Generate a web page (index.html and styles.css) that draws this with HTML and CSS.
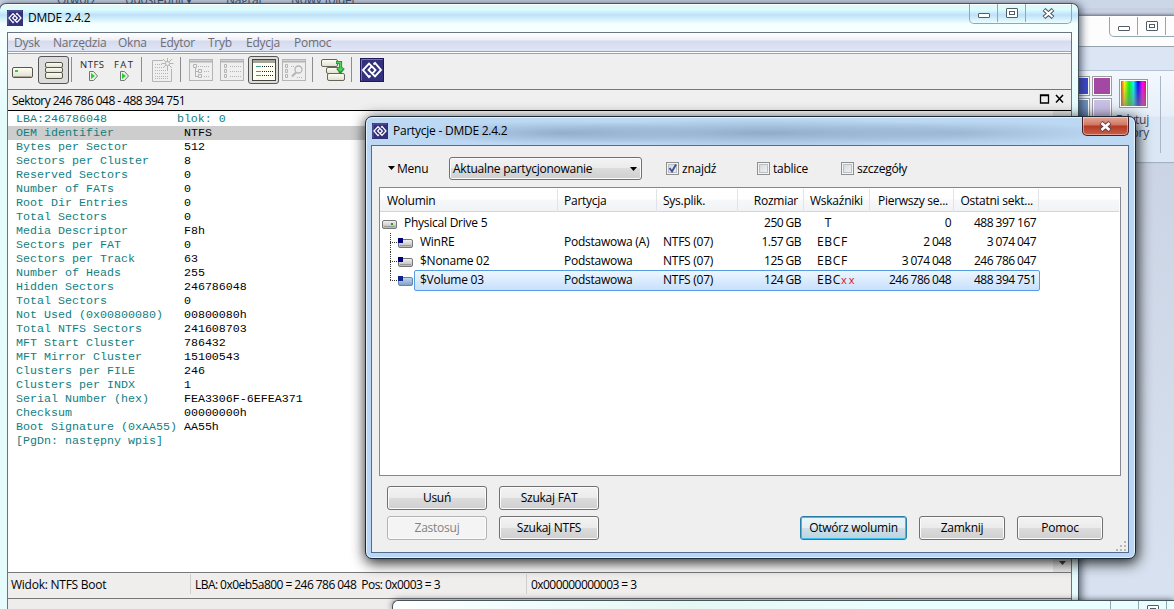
FILE: index.html
```html
<!DOCTYPE html>
<html lang="pl">
<head>
  <meta charset="UTF-8">
  <title>DMDE 2.4.2</title>
  <link rel="stylesheet" href="styles.css">
</head>
<body>

  <svg class="defs" width="0" height="0">
    <defs>
      <linearGradient id="box" x1="0" y1="0" x2="0" y2="1">
        <stop offset="0" stop-color="#fffff4"/><stop offset="1" stop-color="#deded0"/>
      </linearGradient>
      <linearGradient id="drv" x1="0" y1="0" x2="0" y2="1">
        <stop offset="0" stop-color="#f4f4f4"/><stop offset="1" stop-color="#b4b4b4"/>
      </linearGradient>
      <linearGradient id="drvsel" x1="0" y1="0" x2="0" y2="1">
        <stop offset="0" stop-color="#c4daf0"/><stop offset="1" stop-color="#7c9fc4"/>
      </linearGradient>
    </defs>
    <symbol id="logo" viewBox="0 0 24 24">
      <rect x=".5" y=".5" width="23" height="23" fill="#33317c" stroke="#1d1960"/>
      <path d="M1.5 22.500V1.500H22.500" fill="none" stroke="#7774b4"/>
      <path d="M10.500 17.500L9 19L3 12L9 5.500L15.500 12L12.500 15.500M13.500 6.500L15 5L21 12L15 18.500L8.500 12L11.500 8.500" fill="none" stroke="#fff" stroke-width="1.900"/>
    </symbol>
    <symbol id="part" viewBox="0 0 15 10">
      <rect x=".5" y="1.500" width="14" height="8" rx="1.500" fill="url(#drv)" stroke="#777"/>
      <path d="M2 7.500h11" stroke="#999"/>
      <rect width="5" height="5" fill="#00007c"/>
    </symbol>
    <symbol id="partsel" viewBox="0 0 15 10">
      <rect x=".5" y="1.500" width="14" height="8" rx="1.500" fill="url(#drvsel)" stroke="#6484a8"/>
      <rect width="5" height="5" fill="#10248c"/>
    </symbol>
  </svg>

  <!-- okna w tle -->
  <div class="back-top">
    <span class="b1">Otwórz</span><span class="b2">Udostępnij ▾</span><span class="b3">Nagraj</span><span class="b4">Nowy folder</span>
  </div>

  <div class="paint">
    <div class="paint-title">
      <div class="caption"><i><b class="min"></b></i><i><b class="max"></b></i><i></i></div>
    </div>
    <div class="paint-tabs"></div>
    <div class="ribbon">
      <div class="colors">
        <i class="c-blue"></i><i class="c-purple"></i>
        <i class="c-steel"></i><i class="c-lav"></i>
      </div>
      <div class="edit-colors"><span class="rainbow"></span>Edytuj<br>kolory</div>
      <div class="ribbon-sep"></div>
    </div>
  </div>

  <!-- okno główne -->
  <div class="main-window">
    <div class="titlebar">
      <svg class="app-icon" width="16" height="16"><use href="#logo"/></svg>
      <span class="title">DMDE 2.4.2</span>
      <div class="caption"><i><b class="min"></b></i><i><b class="max"></b></i><i class="wide"><svg width="15" height="11"><path d="M3 1.500l9 8M12 1.500l-9 8" stroke="#4c5866" stroke-width="4.200"/><path d="M3.500 2l8 7M11.500 2l-8 7" stroke="#fff" stroke-width="2"/></svg></i></div>
    </div>
    <div class="client">
      <div class="menubar">
        <span class="m1">Dysk</span><span class="m2">Narzędzia</span><span class="m3">Okna</span><span class="m4">Edytor</span><span class="m5">Tryb</span><span class="m6">Edycja</span><span class="m7">Pomoc</span>
      </div>
      <div class="toolbar">
        <svg width="384" height="35" viewBox="8 54 384 35">
          <!-- dysk -->
          <rect x="12.500" y="67.500" width="20" height="10" rx="1.500" fill="url(#box)" stroke="#55554c"/>
          <path d="M14 76.500h17" stroke="#aaa998"/>
          <rect x="15" y="70" width="3" height="2" fill="#3bc43b"/>
          <!-- partycje -->
          <rect x="38.500" y="56.500" width="30" height="27" rx="2.500" class="pressed"/>
          <g fill="url(#box)" stroke="#55554c">
            <rect x="45.500" y="62.500" width="17" height="5" rx="1.500"/>
            <rect x="45.500" y="67.500" width="17" height="5" rx="1.500"/>
            <rect x="45.500" y="72.500" width="17" height="6" rx="1.500"/>
          </g>
          <path d="M71.500 57v25M141.500 57v25M180.500 57v25M312.500 57v25M351.500 57v25" stroke="#8c8c8c"/>
          <text x="80" y="68" textLength="24">NTFS</text>
          <text x="114" y="68" textLength="19">FAT</text>
          <g fill="#e8f4e4" stroke="#6d796d">
            <path d="M89.500 71.500h4l4 4.500l-4 4.500h-4z"/>
            <path d="M120.500 71.500h4l4 4.500l-4 4.500h-4z"/>
          </g>
          <path d="M91 73l4 3l-4 3zM122 73l4 3l-4 3z" fill="#2ccc3c"/>
          <!-- nowy -->
          <g fill="none" stroke="#b4b4b4">
            <path d="M163 60.500H152.500v21H171.500V69"/>
            <path d="M155 64.500h7M155 67.500h8M155 70.500h13M155 73.500h13M155 76.500h13M155 78.500h13" stroke-dasharray="1 1"/>
            <path d="M167.500 58v4M167.500 66v4M161.500 63.500h4M169.500 63.500h4M163 59l3 3M172 59l-3 3M163 68l3-3M172 68l-3-3"/>
            <circle cx="167.500" cy="63.500" r="2"/>
          </g>
          <!-- widoki -->
          <g fill="none" stroke="#b4b4b4">
            <rect x="189.500" y="59.500" width="23" height="21"/><path d="M190 61.500h22" stroke-width="2"/>
            <rect x="220.500" y="59.500" width="23" height="21"/><path d="M221 61.500h22" stroke-width="2"/>
            <rect x="282.500" y="59.500" width="23" height="21"/><path d="M283 61.500h22" stroke-width="2"/>
            <path d="M193.500 64.500h3v3h-3zM195.500 68v9M196 71.500h2M196 76.500h2M198.500 69.500h3v3h-3zM198.500 74.500h3v3h-3z"/>
            <path d="M198 66.500h12M204 71.500h6M204 76.500h6M230 66.500h11M230 71.500h11M230 76.500h11M291 66.500h4" stroke-dasharray="1 1"/>
            <path d="M224.500 64.500h2v3h-2zM224.500 69.500h2v3h-2zM224.500 74.500h2v3h-2z"/>
            <path d="M285.500 64.500h2v3h-2zM285.500 69.500h2v3h-2zM285.500 74.500h2v3h-2z"/>
            <circle cx="298.500" cy="69.500" r="3.500" stroke-width="1.300"/><path d="M296 72.500l-4 4" stroke-width="2"/>
            <path d="M297 77.500h6" stroke-dasharray="1 1"/>
          </g>
          <!-- aktywny widok -->
          <rect x="248.500" y="56.500" width="30" height="27" rx="2.500" class="pressed"/>
          <rect x="252.500" y="59.500" width="23" height="21" fill="#fffff2" stroke="#45453d"/>
          <path d="M253 61.500h22" stroke="#a4a496" stroke-width="3"/>
          <path d="M256 66.500h17M256 71.500h17M256 75.500h17" stroke="#222" stroke-dasharray="1 1"/>
          <path d="M256 66.500h5M256 71.500h5M256 75.500h5" stroke="#3a9c94"/>
          <!-- kopiowanie -->
          <g fill="url(#box)" stroke="#66665a">
            <rect x="326.500" y="67.500" width="13" height="6" rx="1.500"/>
            <rect x="321.500" y="59.500" width="16" height="7" rx="1.500"/>
            <rect x="327.500" y="73.500" width="17" height="7" rx="1.500"/>
          </g>
          <path d="M336 62.500h4.500v8M337.500 68l3 3.500l3-3.500" fill="none" stroke="#238c2d" stroke-width="3.200"/>
          <path d="M336.500 62.500h4v8M338 68l2.500 2.500l2.500-2.500" fill="none" stroke="#4fd258" stroke-width="1.600"/>
          <svg x="360" y="58" width="24" height="24"><use href="#logo"/></svg>
        </svg>
      </div>
      <div class="panel-title">
        <span class="num">Sektory 246 786 048 - 488 394 751</span>
        <svg width="26" height="12"><path d="M1.500 2h8v8h-8zM1 2.500h9" fill="none" stroke="#000" stroke-width="1.300"/><path d="M17 2l7 7.500M24 2l-7 7.500" stroke="#000" stroke-width="1.500"/></svg>
      </div>
      <div class="editor">
        <div class="fields">
          <div>LBA:246786048          blok: 0</div>
          <div class="current">OEM identifier          <b>NTFS</b></div>
          <div>Bytes per Sector        <b>512</b></div>
          <div>Sectors per Cluster     <b>8</b></div>
          <div>Reserved Sectors        <b>0</b></div>
          <div>Number of FATs          <b>0</b></div>
          <div>Root Dir Entries        <b>0</b></div>
          <div>Total Sectors           <b>0</b></div>
          <div>Media Descriptor        <b>F8h</b></div>
          <div>Sectors per FAT         <b>0</b></div>
          <div>Sectors per Track       <b>63</b></div>
          <div>Number of Heads         <b>255</b></div>
          <div>Hidden Sectors          <b>246786048</b></div>
          <div>Total Sectors           <b>0</b></div>
          <div>Not Used (0x00800080)   <b>00800080h</b></div>
          <div>Total NTFS Sectors      <b>241608703</b></div>
          <div>MFT Start Cluster       <b>786432</b></div>
          <div>MFT Mirror Cluster      <b>15100543</b></div>
          <div>Clusters per FILE       <b>246</b></div>
          <div>Clusters per INDX       <b>1</b></div>
          <div>Serial Number (hex)     <b>FEA3306F-6EFEA371</b></div>
          <div>Checksum                <b>00000000h</b></div>
          <div>Boot Signature (0xAA55) <b>AA55h</b></div>
          <div>[PgDn: następny wpis]</div>
        </div>
        <div class="scrollbar"><svg width="7" height="4"><path d="M0 0h7L3.500 4z" fill="#444"/></svg></div>
      </div>
      <div class="status">
        <span class="s1">Widok: NTFS Boot</span>
        <span class="s2 num">LBA: 0x0eb5a800 = 246 786 048&nbsp; Pos: 0x0003 = 3</span>
        <span class="s3 num">0x000000000003 = 3</span>
      </div>
      <div class="below"></div>
    </div>
  </div>

  <div class="bottom-window"><div class="caption"><i></i><i><b class="max"></b></i><i></i></div></div>

  <!-- okno partycji -->
  <div class="dialog">
    <div class="dialog-title">
      <svg class="app-icon" width="16" height="16"><use href="#logo"/></svg>
      <span class="title">Partycje - DMDE 2.4.2</span>
      <div class="close"><svg width="15" height="11"><path d="M3 1.500l9 8M12 1.500l-9 8" stroke="#5c4048" stroke-width="4.400"/><path d="M3.500 2l8 7M11.500 2l-8 7" stroke="#fff" stroke-width="2.600"/></svg></div>
    </div>
    <div class="dialog-body">
      <div class="options">
        <span class="menu-btn"><svg width="7" height="4"><path d="M0 0h7L3.500 4z"/></svg>Menu</span>
        <div class="select">Aktualne partycjonowanie<svg width="7" height="4"><path d="M0 0h7L3.500 4z"/></svg></div>
        <label class="o1"><i class="check"><svg width="11" height="11"><path d="M2.500 5l2.500 3.500l4-7" fill="none" stroke="#44549c" stroke-width="2"/></svg></i>znajdź</label>
        <label class="o2"><i class="check"></i>tablice</label>
        <label class="o3"><i class="check"></i>szczegóły</label>
      </div>
      <div class="list">
        <div class="row head">
          <span>Wolumin</span><span>Partycja</span><span>Sys.plik.</span><span class="r">Rozmiar</span><span>Wskaźniki</span><span class="r">Pierwszy se...</span><span class="r">Ostatni sekt...</span>
        </div>
        <div class="row drive">
          <span class="name"><svg width="15" height="9"><rect x=".5" y=".5" width="14" height="8" rx="1.500" fill="url(#drv)" stroke="#777"/><path d="M2 6.500h11" stroke="#999"/><rect x="9" y="3" width="2" height="2" fill="#1ca01c"/></svg>Physical Drive 5</span>
          <span></span><span></span><span class="r num">250 GB</span><span class="flags">&nbsp; T</span><span class="r num">0</span><span class="r num">488 397 167</span>
        </div>
        <div class="row">
          <span class="name child"><svg width="15" height="10"><use href="#part"/></svg>WinRE</span>
          <span>Podstawowa (A)</span><span>NTFS (07)</span><span class="r num">1.57 GB</span><span class="flags">EBCF</span><span class="r num">2 048</span><span class="r num">3 074 047</span>
        </div>
        <div class="row">
          <span class="name child"><svg width="15" height="10"><use href="#part"/></svg>$Noname 02</span>
          <span>Podstawowa</span><span>NTFS (07)</span><span class="r num">125 GB</span><span class="flags">EBCF</span><span class="r num">3 074 048</span><span class="r num">246 786 047</span>
        </div>
        <div class="row selected">
          <span class="name child last"><svg width="15" height="10"><use href="#partsel"/></svg>$Volume 03</span>
          <span>Podstawowa</span><span>NTFS (07)</span><span class="r num">124 GB</span><span class="flags">EBC<em>xx</em></span><span class="r num">246 786 048</span><span class="r num">488 394 751</span>
        </div>
      </div>
      <div class="buttons">
        <div class="grid">
          <button>Usuń</button><button>Szukaj FAT</button>
          <button disabled>Zastosuj</button><button>Szukaj NTFS</button>
        </div>
        <div class="actions">
          <button class="default">Otwórz wolumin</button><button>Zamknij</button><button>Pomoc</button>
        </div>
      </div>
      <svg class="grip" width="10" height="10"><path d="M8 1h2M8 5h2M4 5h2M8 9h2M4 9h2M0 9h2" stroke="#b8b8b8" stroke-width="2"/></svg>
    </div>
  </div>

</body>
</html>
```

FILE: styles.css
```css
* {
  box-sizing: border-box;
}
body {
  margin: 0;
  width: 1174px;
  height: 609px;
  position: relative;
  overflow: hidden;
  font: 12px/15px "Open Sans", "Noto Sans", sans-serif;
  font-stretch: 90%;
  letter-spacing: -0.250px;
  color: #000;
  background: linear-gradient(#c6cfe0, #d8e2f0);
}
i, em {
  font-style: normal;
}
.defs {
  position: absolute;
}
.num {
  letter-spacing: -0.550px;
}

/* Okna w tle */
.back-top {
  position: absolute;
  left: 0;
  top: -8px;
  width: 1174px;
  height: 16px;
  overflow: hidden;
  background: linear-gradient(#bccbe0 0, #cbd6e6 4px);
  color: #39506e;
  line-height: 16px;
  display: flex;
}
.b1 { margin-left: 57px; width: 68px; }
.b2 { width: 101px; }
.b3 { width: 65px; }
.paint {
  position: absolute;
  left: 1060px;
  top: 15px;
  width: 114px;
  height: 148px;
  border-top: 1px solid #858c96;
  box-shadow: 0 -1px 2px #8993a3;
  background: #dfe8f5;
}
.paint-title {
  height: 31px;
  overflow: hidden;
  background: #fdfdfd;
  border-top: 1px solid #fff;
  border-bottom: 1px solid #97a2b0;
}
.paint .caption {
  margin-left: 49px;
  width: 120px;
}
.paint-tabs {
  height: 24px;
  background: #dbe5f4;
  border-bottom: 1px solid #b4c3d7;
}
.ribbon {
  display: flex;
  height: 92px;
  padding-top: 5px;
  background: linear-gradient(#f3f8fd 0, #e6eef9 45px, #dce7f5 46px);
  border-bottom: 1px solid #a4b1c3;
}
.colors {
  display: grid;
  grid-template-columns: 20px 20px;
  grid-template-rows: 20px 20px;
  gap: 2px;
  margin-left: 10px;
}
.colors i {
  border: 1px solid #9c9c9c;
  box-shadow: inset 0 0 0 1px #fff;
}
.c-blue { background: #3f48cc; }
.c-purple { background: #a349a4; }
.c-steel { background: #7092be; }
.c-lav { background: #c8bfe7; }
.edit-colors {
  width: 34px;
  margin: 3px 0 0 3px;
  text-align: right;
  line-height: 13px;
  color: #3c4a60;
}
.rainbow {
  display: block;
  width: 29px;
  height: 29px;
  margin: 0 0 5px 4px;
  border: 1px solid #999;
  box-shadow: inset 0 0 0 1px #fff;
  background: linear-gradient(transparent, rgba(128, 128, 128, 0.7)), linear-gradient(90deg, red, yellow, lime, cyan, blue, magenta, red);
}
.ribbon-sep {
  width: 1px;
  height: 77px;
  margin-left: 11px;
  background: #a8b6c8;
}

/* Przyciski okien */
.caption {
  display: flex;
  width: 103px;
  height: 20px;
  border: 1px solid #93a8ae;
  border-top: 0;
  border-radius: 0 0 5px 5px;
}
.caption i {
  width: 28px;
  height: 18px;
  display: flex;
  align-items: center;
  justify-content: center;
  border-right: 1px solid #93a8ae;
}
.caption i:last-child {
  flex: 1;
  border: 0;
}
.min {
  width: 12px;
  height: 5px;
  margin-top: 5px;
  border: 1px solid #535c66;
  border-radius: 1px;
  background: #fff;
}
.max {
  width: 12px;
  height: 10px;
  border: 1px solid #535c66;
  border-radius: 1px;
  background: #fff;
  display: flex;
}
.max::after {
  content: "";
  margin: 2px;
  flex: 1;
  border: 1px solid #535c66;
}

/* Okno główne */
.main-window {
  position: absolute;
  left: -1px;
  top: 3px;
  width: 1080px;
  height: 606px;
  overflow: hidden;
  padding: 0 6px 0 7px;
  border: 1px solid #46545f;
  border-bottom: 0;
  border-radius: 7px 7px 0 0;
  background: linear-gradient(#e4f8fb 0, #dafcfd 6px, #bfdffa 11px, #d3f2fb 15px, #f4ffff 20px, #f8ffff 30px, #e4fbfc 110px, #e6fcfc);
  box-shadow: inset 0 1px #fff, 2px 1px 9px rgba(30, 40, 60, 0.75);
}
.titlebar {
  display: flex;
  height: 28px;
}
.app-icon {
  margin-top: 6px;
  flex: none;
}
.title {
  margin: 6px 0 0 5px;
}
.titlebar .caption {
  margin-left: auto;
}
.client {
  border: 1px solid #697581;
  border-bottom: 0;
  height: 577px;
  background: #efefef;
}
.menubar {
  display: flex;
  height: 21px;
  padding: 2px 0 0 6px;
  color: #6d6d73;
  background: linear-gradient(#fff 0, #eef0f8 7px, #d5daee 8px, #e1e6f6 18px, #9ca2a8 18px, #9ca2a8 19px, #fff 19px, #fff 20px, #9ca2a8 20px);
}
.m1 { width: 39px; }
.m2 { width: 65px; }
.m3 { width: 42px; }
.m4 { width: 48px; }
.m5 { width: 38px; }
.m6 { width: 48px; }
.toolbar {
  height: 36px;
  border-bottom: 1px solid #777;
}
.toolbar svg {
  display: block;
}
.toolbar text {
  font-size: 9.500px;
  letter-spacing: 0;
  fill: #29261f;
}
.pressed {
  fill: #dcdcdc;
  stroke: #555;
}
.panel-title {
  display: flex;
  justify-content: space-between;
  height: 21px;
  padding: 3px 6px 0 4px;
  border-bottom: 1px solid #000;
}
.editor {
  display: flex;
  height: 461px;
  background: #fff;
}
.fields {
  flex: 1;
  padding-top: 1px;
  font: 11.670px/14px "Liberation Mono", monospace;
  letter-spacing: 0;
  color: #10807f;
}
.fields div {
  height: 14px;
  padding-left: 8px;
  white-space: pre;
}
.fields b {
  font-weight: normal;
  color: #000;
}
.fields .current {
  background: #cdcdcd;
}
.scrollbar {
  width: 18px;
  background: #ececec;
  display: flex;
  align-items: flex-end;
  justify-content: center;
  padding-bottom: 7px;
}
.status {
  display: flex;
  height: 24px;
  padding-top: 1px;
  border-top: 1px solid #77797c;
  background: #f0eded;
}
.status span {
  height: 20px;
  padding: 3px 0 0 4px;
  border-right: 1px solid #d0cdcd;
}
.status .s1 {
  width: 183px;
  padding-left: 3px;
}
.status .s2 { width: 336px; }
.status .s3 { border: 0; }
.below {
  height: 20px;
  border-top: 1px solid #777;
  background: #efecec;
  margin-top: 2px;
}
.bottom-window {
  position: absolute;
  left: 392px;
  top: 600px;
  width: 782px;
  height: 9px;
  overflow: hidden;
  padding-left: 717px;
  border: 1px solid #46545f;
  border-width: 1px 0 0 1px;
  border-radius: 6px 0 0 0;
  background: linear-gradient(90deg, #fff, #f2fcfc 130px, #e6f8f4 300px, #eaffff 500px);
  box-shadow: 0 0 6px rgba(0, 0, 0, 0.6);
}

/* Okno partycji */
.dialog {
  position: absolute;
  left: 365px;
  top: 116px;
  width: 771px;
  height: 443px;
  padding: 0 6px 0 5px;
  border: 1px solid #1d2a38;
  border-radius: 7px;
  background: linear-gradient(transparent 27px, #b9d7f4 30px), radial-gradient(ellipse 150px 12px at 200px 16px, #93aecb, transparent), radial-gradient(ellipse 240px 14px at 400px 16px, #8fabc9, transparent), radial-gradient(ellipse 160px 12px at 590px 16px, #a0bad6, transparent), #bdd8f3;
  box-shadow: inset 0 0 0 1px #e2f2ff, 1px 3px 14px 1px rgba(0, 0, 0, 0.85);
}
.dialog-title {
  display: flex;
  height: 28px;
  padding-left: 1px;
}
.close {
  width: 47px;
  height: 19px;
  margin-left: auto;
  display: flex;
  align-items: center;
  justify-content: center;
  border: 1px solid #43212a;
  border-top: 0;
  border-radius: 0 0 5px 5px;
  background: linear-gradient(#e3a796 0, #d07662 8px, #b33922 9px, #c9604a);
  box-shadow: inset 0 0 0 1px rgba(255, 255, 255, 0.4);
}
.dialog-body {
  position: relative;
  height: 408px;
  padding: 12px 7px 0;
  border: 1px solid #526d8a;
  background: #efefef;
}
.options {
  display: flex;
  height: 29px;
}
.menu-btn {
  width: 70px;
  padding: 3px 0 0 9px;
}
.menu-btn svg {
  margin: 0 2px 3px 0;
}
.select {
  width: 193px;
  height: 23px;
  margin: -1px 24px 0 0;
  padding: 0 4px 0 3px;
  display: flex;
  align-items: center;
  justify-content: space-between;
}
.select, button {
  border: 1px solid #707070;
  border-radius: 3px;
  background: linear-gradient(#f3f3f3 0, #ebebeb 49%, #dcdcdc 50%, #cfcfcf);
  box-shadow: inset 0 0 0 1px #fbfbfb;
}
label {
  display: flex;
  height: 21px;
  align-items: center;
}
.o1 { width: 91px; }
.o2 { width: 84px; }
.check {
  width: 13px;
  height: 13px;
  margin-right: 3px;
  border: 1px solid #8e8f8f;
  box-shadow: inset 0 0 0 1px #f4f4f4, inset 0 0 0 2px #bcc0c5;
  background: linear-gradient(135deg, #cfd3d8, #f6f6f6);
}
.check svg {
  display: block;
}
.list {
  height: 289px;
  border: 1px solid #828790;
  background: #fff;
  padding: 1px 1px 0 0;
}
.row {
  display: grid;
  grid-template-columns: 178px 99px 81px 66px 66px 84px 85px;
  height: 19px;
  line-height: 18px;
  white-space: nowrap;
}
.row span {
  padding-left: 6px;
}
.row .r {
  text-align: right;
  padding: 0 3px 0 0;
}
.head {
  height: 23px;
  line-height: 23px;
  margin-bottom: 2px;
  border-bottom: 1px solid #d5d5d5;
  background: linear-gradient(#fff 0, #fff 10px, #f7f8fa 11px, #f1f2f4);
}
.head span {
  border-right: 1px solid #e0e3e7;
}
.head span:first-child {
  padding-left: 7px;
}
.head .r {
  padding-right: 5px;
}
.row .name {
  display: flex;
  align-items: center;
  padding: 0 0 1px 2px;
}
.name svg {
  position: relative;
  top: 1px;
  margin-right: 7px;
}
.row .child {
  padding-left: 0;
  margin-left: 10px;
  background: repeating-linear-gradient(#333 0 1px, transparent 1px 2px) 0 0 / 1px 100% no-repeat, repeating-linear-gradient(90deg, #333 0 1px, transparent 1px 2px) 0 9px / 7px 1px no-repeat;
}
.row .last {
  background-size: 1px 10px, 7px 1px;
}
.child svg {
  margin: 0 7px 0 8px;
}
.row .flags {
  letter-spacing: 0.700px;
  padding-left: 13px;
}
.flags em {
  color: #e01020;
  font-size: 11px;
  letter-spacing: 2px;
}
.selected {
  position: relative;
}
.selected::before {
  content: "";
  position: absolute;
  left: 34px;
  top: -1px;
  width: 624px;
  height: 19px;
  border: 1px solid #569de5;
  border-radius: 2px;
  background: linear-gradient(rgba(235, 245, 255, 0.9), rgba(193, 221, 252, 0.9));
}
.selected span {
  position: relative;
}
.buttons {
  display: flex;
  justify-content: space-between;
  align-items: flex-end;
  padding: 10px 18px 0 8px;
}
.grid {
  display: grid;
  grid-template-columns: 100px 100px;
  gap: 6px 12px;
}
button {
  height: 24px;
  padding: 0 0 2px;
  font: inherit;
  font-stretch: 90%;
  letter-spacing: inherit;
  color: #000;
}
button:disabled {
  color: #838383;
  border-color: #b4b4b4;
  background: #f4f4f4;
}
.actions {
  display: grid;
  grid-template-columns: 107px 86px 86px;
  gap: 12px;
}
.default {
  border-color: #2c7ca8;
  background: linear-gradient(#ecf4f8 0, #e2eff5 49%, #cde0e9 50%, #bdd3de);
  box-shadow: inset 0 0 0 1px #36bff0;
}
.grip {
  position: absolute;
  right: 2px;
  bottom: 1px;
}
```
